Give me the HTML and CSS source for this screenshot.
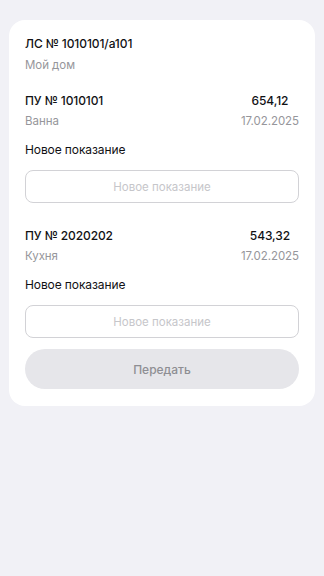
FILE: index.html
```html
<!DOCTYPE html>
<html lang="ru">
<head>
<meta charset="utf-8">
<link rel="stylesheet" href="styles.css">
</head>
<body>
<div class="page">
  <div class="card">
    <div class="account">
      <div class="title">ЛС № 1010101/a101</div>
      <div class="sub">Мой дом</div>
    </div>
    <div class="meter">
      <div class="meter-head">
        <div class="col-left">
          <div class="title">ПУ № 1010101</div>
          <div class="sub">Ванна</div>
        </div>
        <div class="col-right">
          <div class="title">654,12</div>
          <div class="sub">17.02.2025</div>
        </div>
      </div>
      <div class="label">Новое показание</div>
      <input class="field" type="text" placeholder="Новое показание">
    </div>
    <div class="meter second">
      <div class="meter-head">
        <div class="col-left">
          <div class="title">ПУ № 2020202</div>
          <div class="sub">Кухня</div>
        </div>
        <div class="col-right">
          <div class="title">543,32</div>
          <div class="sub">17.02.2025</div>
        </div>
      </div>
      <div class="label">Новое показание</div>
      <input class="field" type="text" placeholder="Новое показание">
    </div>
    <button class="submit" type="button">Передать</button>
  </div>
</div>
</body>
</html>
```
FILE: styles.css
```css
html, body {
  margin: 0;
  padding: 0;
  background: #f1f1f6;
  font-family: Inter, Roboto, "Noto Sans", sans-serif;
  -webkit-font-smoothing: antialiased;
}
.page {
  padding: 20px 9px;
  height: 576px;
  box-sizing: border-box;
}
.card {
  background: #ffffff;
  border-radius: 16px;
  padding: 16px 16px 17px;
  display: flex;
  flex-direction: column;
}
.title {
  font-size: 12px;
  line-height: 16px;
  font-weight: 500;
  letter-spacing: -0.1px;
  color: #111114;
}
.sub {
  font-size: 11.5px;
  line-height: 16px;
  letter-spacing: -0.05px;
  color: #96969b;
}
.account {
  display: flex;
  flex-direction: column;
  gap: 5px;
}
.meter {
  display: flex;
  flex-direction: column;
  margin-top: 20px;
}
.meter.second {
  margin-top: 25px;
}
.meter-head {
  display: flex;
  justify-content: space-between;
}
.col-left, .col-right {
  display: flex;
  flex-direction: column;
  gap: 4px;
}
.col-right {
  align-items: center;
}
.label {
  margin-top: 13px;
  font-size: 12px;
  line-height: 16px;
  letter-spacing: -0.1px;
  color: #111114;
}
.field {
  margin-top: 12px;
  height: 33px;
  box-sizing: border-box;
  border: 1px solid #d2d2d6;
  border-radius: 8px;
  background: #fff;
  font-family: inherit;
  font-size: 11.5px;
  text-align: center;
  outline: none;
  padding: 0 10px;
}
.field::placeholder {
  color: #c6c6ca;
}
.submit {
  margin-top: 11px;
  height: 40px;
  border: none;
  border-radius: 20px;
  background: #e6e6ea;
  color: #8e8e93;
  font-family: inherit;
  font-size: 12px;
  font-weight: 500;
}
```
